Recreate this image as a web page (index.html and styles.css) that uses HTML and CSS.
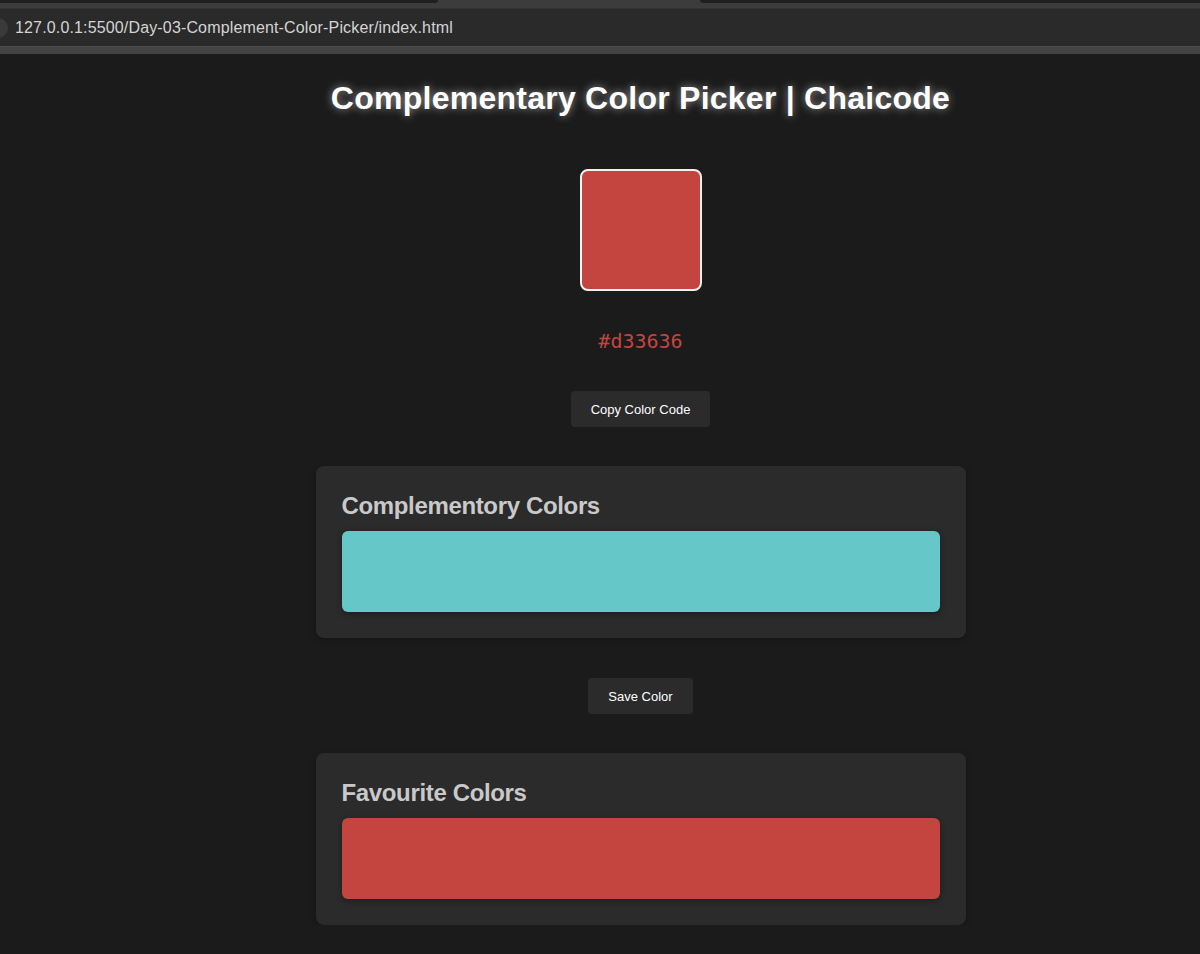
FILE: index.html
```html
<!DOCTYPE html>
<html lang="en">
<head>
<meta charset="UTF-8">
<title>Complementary Color Picker | Chaicode</title>
<link rel="stylesheet" href="styles.css">
</head>
<body>
  <div class="chrome">
    <div class="tabs">
      <div class="tab tab-left"></div>
      <div class="tab-gap"></div>
      <div class="tab tab-right"></div>
    </div>
    <div class="toolbar-top"></div>
    <div class="addressbar">
      <span class="site-dot"></span>
      <span class="url">127.0.0.1:5500/Day-03-Complement-Color-Picker/index.html</span>
    </div>
    <div class="divider"></div>
  </div>

  <main class="page">
    <h1 class="title">Complementary Color Picker | Chaicode</h1>
    <div class="picker"></div>
    <p class="hex">#d33636</p>
    <button class="btn">Copy Color Code</button>

    <section class="card">
      <h2 class="card-title">Complementory Colors</h2>
      <div class="swatch swatch-teal"></div>
    </section>

    <button class="btn btn-save">Save Color</button>

    <section class="card">
      <h2 class="card-title">Favourite Colors</h2>
      <div class="swatch swatch-red"></div>
    </section>
  </main>
</body>
</html>
```

FILE: styles.css
```css
html, body {
  margin: 0;
  padding: 0;
  background: #1b1b1b;
  overflow: hidden;
  font-family: "Liberation Sans", Arial, sans-serif;
}

.chrome {
  width: 1200px;
}

.tabs {
  display: flex;
  height: 3px;
  background: #3c3c3c;
}

.tab {
  background: #1f1f1f;
}

.tab-left {
  width: 438px;
  border-bottom-right-radius: 3px;
}

.tab-gap {
  flex: 1;
}

.tab-right {
  width: 500px;
  border-bottom-left-radius: 3px;
}

.toolbar-top {
  height: 5px;
  background: #3c3c3c;
  border-bottom: 1px solid #323232;
}

.addressbar {
  display: flex;
  align-items: center;
  height: 37px;
  background: #2a2a2a;
}

.site-dot {
  width: 20px;
  height: 20px;
  margin-left: -12px;
  margin-right: 7px;
  border-radius: 50%;
  background: #3a3a3a;
}

.url {
  color: #d4d4d4;
  font-size: 16px;
  letter-spacing: 0.15px;
}

.divider {
  height: 7px;
  background: #434343;
  border-top: 1px solid #4c4c4c;
}

.page {
  box-sizing: border-box;
  width: 1200px;
  padding-left: 81px;
  display: flex;
  flex-direction: column;
  align-items: center;
}

.title {
  margin: 26px 0 0;
  font-size: 32px;
  font-weight: bold;
  line-height: 37px;
  letter-spacing: 0.25px;
  color: #ffffff;
  text-shadow: 0 0 8px rgba(255, 255, 255, 0.55);
}

.picker {
  width: 118px;
  height: 118px;
  margin-top: 52px;
  border: 2px solid #f2f2f2;
  border-radius: 8px;
  background: #c4453f;
}

.hex {
  margin: 39px 0 0;
  font-family: "DejaVu Sans Mono", monospace;
  font-size: 20px;
  line-height: 23px;
  color: #c4453f;
}

.btn {
  margin-top: 38px;
  height: 36px;
  padding: 0 20px;
  border: none;
  border-radius: 4px;
  background: #2b2b2b;
  color: #ffffff;
  font-family: "Liberation Sans", Arial, sans-serif;
  font-size: 13px;
}

.btn-save {
  margin-top: 40px;
}

.card {
  box-sizing: border-box;
  width: 650px;
  margin-top: 39px;
  padding: 26px;
  border-radius: 8px;
  background: #2b2b2b;
  box-shadow: 0 2px 6px rgba(0, 0, 0, 0.25);
}

.card-title {
  margin: 0;
  font-size: 24px;
  line-height: 28px;
  font-weight: bold;
  letter-spacing: -0.35px;
  color: #c9c9c9;
}

.swatch {
  height: 81px;
  margin-top: 11px;
  border-radius: 6px;
  box-shadow: 0 2px 6px rgba(0, 0, 0, 0.35);
}

.swatch-teal {
  background: #65c7c8;
}

.swatch-red {
  background: #c4453f;
}
```
